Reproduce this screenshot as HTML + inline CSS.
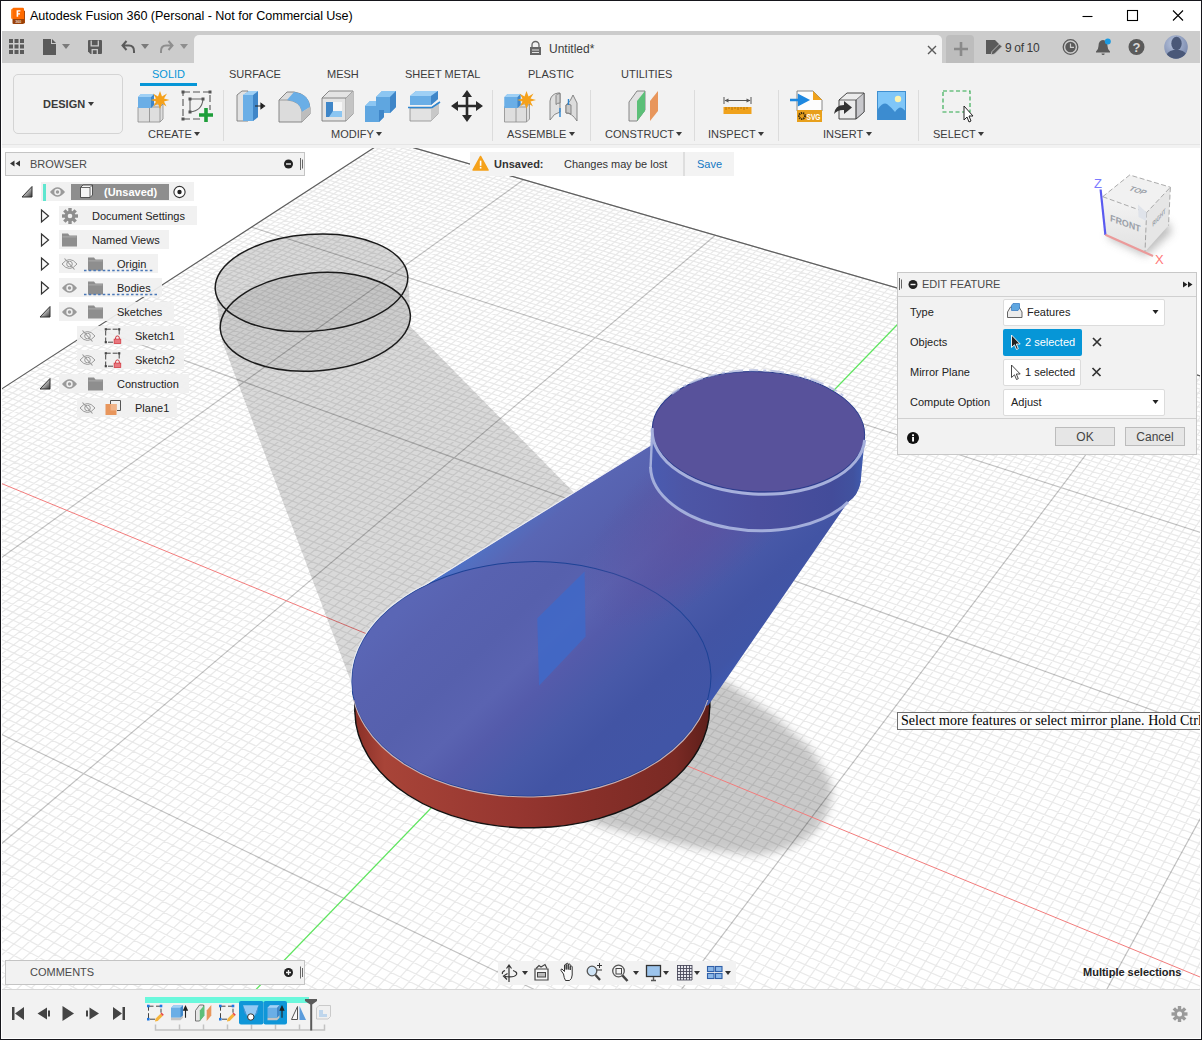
<!DOCTYPE html>
<html lang="en"><head><meta charset="utf-8"><title>Autodesk Fusion 360</title>
<style>
*{box-sizing:border-box;margin:0;padding:0}
html,body{width:1202px;height:1040px;overflow:hidden;background:#16161c}
body{font-family:"Liberation Sans",sans-serif;font-size:12px;color:#333;position:relative}
.win{position:absolute;left:1px;top:1px;width:1200px;height:1038px;background:#fff;overflow:hidden}
.abs{position:absolute}
svg{position:absolute;overflow:visible}
.t{position:absolute;white-space:nowrap;line-height:14px}
/* title bar */
.title{left:29px;top:7px;font-size:12.6px;color:#000;letter-spacing:-0.05px;line-height:16px}
.strip{left:0;top:30px;width:1200px;height:32px;background:#cccccc}
.doctab{left:193px;top:34px;width:748px;height:30px;background:#f2f2f2;border-radius:5px 5px 0 0}
.plus{left:945px;top:34px;width:28px;height:28px;background:#bdbdbd;border-radius:4px 4px 0 0}
.ribbon{left:0;top:62px;width:1200px;height:85px;background:#f2f2f2}
.rib-bot{left:0;top:143px;width:1200px;height:1px;background:#e5e5e5}
.tab{font-size:11px;color:#3c3c3c;top:66px}
.glabel{font-size:11px;color:#3c3c3c;top:126px}
.sep{top:89px;width:1px;height:51px;background:#dcdcdc}
.design{left:12px;top:73px;width:110px;height:60px;border:1px solid #d4d4d4;border-radius:5px;background:#f2f2f2}
.vp{left:0;top:147px;overflow:hidden}
.panelhdr{background:#f2f2f2;border:1px solid #c4c4c4}
.row{position:absolute;height:19px;background:rgba(240,240,240,.92)}
.row .t{top:3px;color:#222;font-size:11px}
.bottom{left:0;top:989px;width:1200px;height:49px;background:#f2f2f2}
</style></head><body><div class="win">

<!-- title bar -->
<svg class="abs" style="left:9px;top:6px" width="16" height="18" viewBox="0 0 16 18"><path d="M1 2.5 L3 1.5 V12 L1 11.5Z" fill="#ff8a2a"/><path d="M14 3.5 L15 4 V16 L14 16.5Z" fill="#a8460a"/><rect x="2.5" y="0.8" width="11.5" height="11.6" rx="1.2" fill="#ff6b00"/><path d="M2.5 12 H14 V16 a1 1 0 0 1 -1 1 H3.5 a1 1 0 0 1 -1 -1Z" fill="#9b4209"/><path d="M6.6 3.2 H10.4 V4.6 H8.2 V6.2 H10 V7.5 H8.2 V9.8 H6.6Z" fill="#fff"/><text x="8.3" y="15.6" font-size="3.6" font-weight="700" fill="#e8d8c8" text-anchor="middle" font-family="Liberation Sans,sans-serif">360</text></svg>
<div class="t title">Autodesk Fusion 360 (Personal - Not for Commercial Use)</div>
<svg class="abs" style="left:1075px;top:4px" width="120" height="24" viewBox="1076 5 120 24" fill="none" stroke="#000" stroke-width="1.1"><path d="M1082.500 16.500 H1092.500"/><rect x="1127.5" y="10.500" width="10" height="10"/><path d="M1173 10.500 L1183 20.500 M1183 10.500 L1173 20.500"/></svg>
<!-- toolbar strip -->
<div class="abs strip"></div>
<div class="abs doctab"></div>
<div class="abs plus"></div>
<div class="abs ribbon"></div>
<div class="abs rib-bot"></div>

<!-- quick access toolbar -->
<svg class="abs" style="left:0;top:30px" width="200" height="32" viewBox="1 31 200 32">
<g fill="#5a5a5a">
<rect x="9" y="39" width="4" height="4"/><rect x="14.500" y="39" width="4" height="4"/><rect x="20" y="39" width="4" height="4"/>
<rect x="9" y="44.500" width="4" height="4"/><rect x="14.500" y="44.500" width="4" height="4"/><rect x="20" y="44.500" width="4" height="4"/>
<rect x="9" y="50" width="4" height="4"/><rect x="14.500" y="50" width="4" height="4"/><rect x="20" y="50" width="4" height="4"/>
<path d="M43 39 H51 V44 H56 V55 H43Z M52 39 L56 43 H52Z"/>
<path d="M62 44 H70 L66 49Z" fill="#7a7a7a"/>
<path d="M88 41 a1 1 0 0 1 1 -1 H101 a1 1 0 0 1 1 1 V53 a1 1 0 0 1 -1 1 H90.500 L88 51.500Z"/><path d="M91.200 40.500 V45.800 H98.300 V40.500 M92.200 54 V49.700 H97.300 V54" stroke="#ccc" stroke-width="1.300" fill="none"/>
<path d="M141 44 H149 L145 49Z" fill="#7a7a7a"/>
<path d="M180 44 H188 L184 49Z" fill="#8e8e8e"/>
</g>
<path d="M126.500 41 L122.500 45.500 L126.500 50 M123 45.500 H129 Q134 45.500 134 51 V53" fill="none" stroke="#5a5a5a" stroke-width="2"/>
<path d="M168.500 41 L172.500 45.500 L168.500 50 M172 45.500 H166 Q161 45.500 161 51 V53" fill="none" stroke="#8e8e8e" stroke-width="2"/>
</svg>
<!-- doc tab content -->
<svg class="abs" style="left:525px;top:38px" width="20" height="20" viewBox="526 39 20 20"><path d="M532 47 V45 a3.500 3.500 0 0 1 7 0 V47" fill="none" stroke="#666" stroke-width="1.300"/><rect x="530" y="47" width="11" height="8" fill="#666"/><path d="M532 50 H539 M532 52.500 H539" stroke="#f2f2f2" stroke-width="0.900"/></svg>
<div class="t" style="left:548px;top:41px;font-size:12px;color:#3c3c3c">Untitled*</div>
<svg class="abs" style="left:924px;top:42px" width="14" height="14" viewBox="0 0 14 14"><path d="M3 3 L11 11 M11 3 L3 11" stroke="#5a5a5a" stroke-width="1.400"/></svg>
<svg class="abs" style="left:950px;top:38px" width="20" height="20" viewBox="0 0 20 20"><path d="M10 3 V17 M3 10 H17" stroke="#8a8a8a" stroke-width="2.600"/></svg>
<!-- right icons -->
<svg class="abs" style="left:980px;top:34px" width="220" height="28" viewBox="981 35 220 28">
<path d="M986 40 H995 L999 44 V47 L992 54 H986Z" fill="#5a5a5a"/><path d="M991 55 L992 51.500 L999.500 44 L1002 46.500 L994.500 54Z" fill="#5a5a5a" stroke="#ccc" stroke-width="0.800"/>
<circle cx="1070.500" cy="47" r="7.300" fill="none" stroke="#5a5a5a" stroke-width="1.300"/><circle cx="1070.500" cy="47" r="5.200" fill="#5a5a5a"/><path d="M1070.500 43.500 V47.300 H1074" fill="none" stroke="#ccc" stroke-width="1.200"/>
<path d="M1103 40 q-4.500 0.500 -4.500 6 q0 3.500 -2.500 5.500 V52.500 H1110 V51.500 q-2.500 -2 -2.500 -5.500 q0 -5.500 -4.500 -6Z M1101.500 53.500 a1.600 1.600 0 0 0 3.200 0Z" fill="#5a5a5a"/><circle cx="1107.800" cy="41.500" r="3" fill="#1b9ae0"/>
<circle cx="1136.500" cy="47" r="8" fill="#5a5a5a"/><text x="1136.500" y="52" font-size="13" font-weight="700" fill="#d8d8d8" text-anchor="middle" font-family="Liberation Sans,sans-serif">?</text>
<defs><radialGradient id="av" cx="0.4" cy="0.35" r="0.8"><stop offset="0" stop-color="#b8c4dc"/><stop offset="1" stop-color="#6f7fa6"/></radialGradient><clipPath id="avc"><circle cx="1176" cy="47" r="11.800"/></clipPath></defs>
<circle cx="1176" cy="47" r="11.800" fill="url(#av)"/>
<g clip-path="url(#avc)" fill="#4a5878"><ellipse cx="1176.500" cy="43.500" rx="5.200" ry="6.800"/><path d="M1165 60 q1 -9 8.500 -10 h6 q7.500 1 8.500 10Z"/></g>
</svg>
<div class="t" style="left:1004px;top:40px;font-size:12px;letter-spacing:-0.35px;color:#3a3a3a">9 of 10</div>

<!-- ribbon -->
<div class="abs design"></div>
<div class="t" style="left:42px;top:96px;font-size:11px;font-weight:700;color:#3a3a3a">DESIGN</div>
<div class="t tab" style="left:151px;color:#0696d7">SOLID</div>
<div class="abs" style="left:139px;top:82px;width:57px;height:3px;background:#0696d7"></div>
<div class="t tab" style="left:228px">SURFACE</div>
<div class="t tab" style="left:326px">MESH</div>
<div class="t tab" style="left:404px">SHEET METAL</div>
<div class="t tab" style="left:527px">PLASTIC</div>
<div class="t tab" style="left:620px">UTILITIES</div>
<div class="t glabel" style="left:147px">CREATE</div>
<div class="t glabel" style="left:330px">MODIFY</div>
<div class="t glabel" style="left:506px">ASSEMBLE</div>
<div class="t glabel" style="left:604px">CONSTRUCT</div>
<div class="t glabel" style="left:707px">INSPECT</div>
<div class="t glabel" style="left:822px">INSERT</div>
<div class="t glabel" style="left:932px">SELECT</div>
<div class="abs sep" style="left:222px"></div><div class="abs sep" style="left:491px"></div><div class="abs sep" style="left:589px"></div><div class="abs sep" style="left:693px"></div><div class="abs sep" style="left:777px"></div><div class="abs sep" style="left:917px"></div>
<svg class="abs" style="left:0;top:62px" width="1200" height="85" viewBox="1 63 1200 85">
<defs>
<linearGradient id="bl" x1="0" y1="0" x2="0" y2="1"><stop offset="0" stop-color="#7dbcec"/><stop offset="1" stop-color="#5aa2dc"/></linearGradient>
<g id="arr"><path d="M0 0 H6 L3 4Z" fill="#3a3a3a"/></g>
<g id="star"><path d="M0 -9 L2 -3.500 L7 -6.500 L4 -1.500 L9.500 0 L4 1.500 L6.500 6.500 L2 3.500 L0 9 L-2 3.500 L-6.500 6.500 L-4 1.500 L-9.500 0 L-4 -1.500 L-7 -6.500 L-2 -3.500Z" fill="#f5a11a"/></g>
<g id="newcomp">
<path d="M1 16 L4 13 H26 V28 L23 31 H1Z" fill="#dedede" stroke="#8a8a8a" stroke-width="0.800"/>
<path d="M1 16 H23 V31 M23 16 L26 13 M12.500 16 V31" fill="none" stroke="#8a8a8a" stroke-width="0.800"/>
<path d="M1 6 L4 3 H17 V14 L14 17 H1Z" fill="#6aaee6"/><path d="M1 6 H14 V17 H1Z" fill="#6aaee6"/><path d="M14 6 L17 3 V14 L14 17Z" fill="#3f86c8"/><path d="M1 6 L4 3 H17 L14 6Z" fill="#9fd0f5"/>
<use href="#star" x="23" y="9"/>
</g>
</defs>
<!-- dropdown arrows -->
<use href="#arr" x="88" y="102"/><use href="#arr" x="194" y="132"/><use href="#arr" x="376" y="132"/><use href="#arr" x="569" y="132"/><use href="#arr" x="676" y="132"/><use href="#arr" x="758" y="132"/><use href="#arr" x="866" y="132"/><use href="#arr" x="978" y="132"/>
<!-- CREATE -->
<use href="#newcomp" x="137" y="91"/>
<g transform="translate(181 90)" fill="none" stroke="#555" stroke-width="1.100">
<path d="M2 2 H29 V20 M19 29 H2 V2" stroke-dasharray="7 3"/>
<path d="M9 9 H22 Q21 21 9 22Z" stroke="#666"/>
<g fill="#555" stroke="none"><rect x="0.500" y="0.500" width="3" height="3"/><rect x="27.500" y="0.500" width="3" height="3"/><rect x="0.500" y="27.500" width="3" height="3"/><rect x="7.500" y="7.500" width="3" height="3"/><rect x="20.500" y="7.500" width="3" height="3"/><rect x="7.500" y="20.500" width="3" height="3"/></g>
<path d="M25 18 V32 M18 25 H32" stroke="#1e9e3a" stroke-width="3.600"/>
</g>
<!-- MODIFY: press pull -->
<g transform="translate(236 90)">
<path d="M1 5 L6 1 H12 V31 H1Z" fill="#e2e2e2" stroke="#7a7a7a" stroke-width="0.900"/>
<path d="M7 5 L13 1 H22 V27 L17 31 H7Z" fill="#6aaee6"/><path d="M17 5 L22 1 V27 L17 31Z" fill="#3f86c8"/><path d="M7 5 L13 1 H22 L17 5Z" fill="#9fd0f5"/>
<path d="M19 16 H27 M25 13.500 L28.500 16 L25 18.500Z" stroke="#222" stroke-width="1.200" fill="#222"/>
</g>
<!-- fillet -->
<g transform="translate(278 90)">
<path d="M1 32 V10 L9 2 H16 Q31 4 32 18 V24 L24 32Z" fill="#dcdcdc" stroke="#7a7a7a" stroke-width="0.900"/>
<path d="M24 32 V21 Q22 11 9 10 H1 M24 21 L32 14" fill="none" stroke="#8a8a8a" stroke-width="0.800"/>
<path d="M9 10 L16 2 Q31 4 32 17 L24 22 Q22 11 9 10Z" fill="#6aaee6"/>
<path d="M24 32 V22 L32 17 V24Z" fill="#bdbdbd"/>
</g>
<!-- shell -->
<g transform="translate(321 90)">
<path d="M1 8 L8 1 H32 V24 L25 31 H1Z" fill="#e4e4e4" stroke="#7a7a7a" stroke-width="0.900"/>
<path d="M1 8 H25 V31 M25 8 L32 1" fill="none" stroke="#7a7a7a" stroke-width="0.900"/><path d="M25 8 L32 1 V24 L25 31Z" fill="#c4c4c4"/>
<path d="M5 12 H21 V27 H5Z" fill="#f6f6f6"/><path d="M5 12 H12 V21 H21 V27 H5Z" fill="#3f86c8"/><path d="M12 21 H21 V27 H8Z" fill="#8cc6f2"/>
</g>
<!-- combine -->
<g transform="translate(364 90)">
<path d="M12 7 L18 1 H32 V17 L26 23 H20 V27 L15 32 H1 V16 L6 11 H12Z" fill="#5fa6e0"/>
<path d="M12 7 L18 1 H32 L26 7Z M1 16 L6 11 H12 V16Z" fill="#8cc6f2"/><path d="M26 7 L32 1 V17 L26 23Z M15 20 H20 V27 L15 32Z" fill="#3f86c8"/>
</g>
<!-- offset face / split -->
<g transform="translate(407 90)">
<path d="M3 18 H24 L31 13 V24 L24 31 H3Z" fill="#e2e2e2" stroke="#8a8a8a" stroke-width="0.800"/><path d="M24 18 L31 13 V24 L24 31Z" fill="#c8c8c8"/>
<path d="M3 6 L9 1 H31 V9 L24 15 H3Z" fill="#6aaee6"/><path d="M3 6 L9 1 H31 L24 6Z" fill="#9fd0f5"/><path d="M24 6 L31 1 V9 L24 15Z" fill="#3f86c8"/>
<path d="M1 17.500 H25 L33 12" fill="none" stroke="#2f86d0" stroke-width="1.600"/>
</g>
<!-- move -->
<g transform="translate(451 90)" fill="#2a2a2a"><path d="M14.700 6 H17.300 V14.700 H26 V17.300 H17.300 V26 H14.700 V17.300 H6 V14.700 H14.700Z"/><path d="M16 0 L21 7 H11Z M16 32 L21 25 H11Z M0 16 L7 11 V21Z M32 16 L25 11 V21Z"/></g>
<!-- ASSEMBLE -->
<use href="#newcomp" x="503.500" y="91"/>
<g transform="translate(548 91)" stroke="#7a7a7a" stroke-width="0.900">
<path d="M2 29 V10 Q3 3 10 2 H12 V21 Q6 22 2 29Z" fill="#e0e0e0"/><path d="M8 4.500 Q9 2.500 12 2.500 V12 Q9 12 8 13.500Z" fill="#cfcfcf"/>
<path d="M18 14 Q23 10 25 4 L29 12 V30 Q24 22 18 22Z" fill="#dcdcdc"/><path d="M18 14 Q20.500 12.500 23 14 V23 Q20 21.500 18 22Z" fill="#c8c8c8"/>
<path d="M12 17 V26 M20.500 8 V14" stroke="#2f86d0" stroke-width="1.400"/>
</g>
<!-- CONSTRUCT -->
<g transform="translate(628 90)">
<path d="M1 12 L9 1 H17 V20 L9 31 H1Z" fill="#e2e2e2" stroke="#7a7a7a" stroke-width="0.900"/>
<path d="M9 11 L17 1 V21 L9 31Z" fill="#5cbf78"/>
<path d="M22 11 L30 1 V21 L22 31Z" fill="#e8965c"/>
</g>
<!-- INSPECT -->
<g transform="translate(723 97)">
<path d="M1 0 V7 M28 0 V7 M2 3.500 H27" stroke="#555" stroke-width="1" fill="none"/><path d="M1.500 3.500 L5.500 1.500 V5.500Z M27.500 3.500 L23.500 1.500 V5.500Z" fill="#555"/>
<rect x="0.500" y="10" width="28" height="7" fill="#f0a21c"/><path d="M3 10 V13 M6 10 V12 M9 10 V13 M12 10 V12 M15 10 V13 M18 10 V12 M21 10 V13 M24 10 V12" stroke="#a86a08" stroke-width="0.800"/>
</g>
<!-- INSERT svg -->
<g transform="translate(790 90)">
<path d="M7 1 H23 L32 10 V21 H7Z" fill="#fdfdfd" stroke="#7a7a7a" stroke-width="0.900"/><path d="M23 1 L32 10 H23Z" fill="#f0a21c"/>
<path d="M0 10 H11 M9 5.500 L17.500 10 L9 14.500Z" stroke="#1e88e0" stroke-width="2.400" fill="#1e88e0"/>
<rect x="7" y="20" width="25" height="12" fill="#e8a01c"/><circle cx="12" cy="26" r="3" fill="none" stroke="#3a2a10" stroke-width="2" stroke-dasharray="1.300 0.800"/>
<text x="23.500" y="30" font-size="9" font-weight="700" fill="#fff" text-anchor="middle" font-family="Liberation Sans,sans-serif" textLength="14" lengthAdjust="spacingAndGlyphs">SVG</text>
</g>
<!-- insert derive -->
<g transform="translate(834 90)">
<path d="M5 10 L13 3 H30 V22 L22 29 H5Z" fill="#ececec" stroke="#333" stroke-width="0.900"/><path d="M22 10 L30 3 V22 L22 29Z" fill="#c8c8cc" stroke="#333" stroke-width="0.600"/><path d="M5 10 H22 V29" fill="none" stroke="#333" stroke-width="0.700"/>
<path d="M0 24 Q1 15 10 15 V11 L18 17.500 L10 24 V20 Q4 19.500 0 24Z" fill="#333"/>
</g>
<!-- canvas -->
<g transform="translate(877 91)"><rect x="0.500" y="0.500" width="28" height="28" fill="#7fc6f8" stroke="#3f8fd0" stroke-width="1"/><path d="M1 29 V18 Q6 11 10 13 Q15 17 18 21 Q22 15 25 17 L28.500 20 V29Z" fill="#3c8cd0"/><circle cx="21" cy="8" r="3.200" fill="#fbf3b0"/></g>
<!-- SELECT -->
<g transform="translate(942 90)"><rect x="1" y="1" width="27" height="21" fill="none" stroke="#2aa84a" stroke-width="1.100" stroke-dasharray="4 2.500"/><path d="M22 16 V30 L25 27 L27 32 L29 31 L27 26 H31Z" fill="#fff" stroke="#222" stroke-width="1"/></g>
</svg>

<svg class="vp" width="1200" height="841" viewBox="1 148 1200 841">
<defs>
<linearGradient id="gfade" gradientUnits="userSpaceOnUse" x1="0" y1="330" x2="0" y2="860"><stop offset="0" stop-color="#dadada"/><stop offset="1" stop-color="#dadada" stop-opacity="0"/></linearGradient>
<filter id="blur8" x="-20%" y="-20%" width="140%" height="140%"><feGaussianBlur stdDeviation="4.5"/></filter>
<filter id="blur3" x="-20%" y="-20%" width="140%" height="140%"><feGaussianBlur stdDeviation="2.5"/></filter>
<linearGradient id="gred" gradientUnits="userSpaceOnUse" x1="355" y1="0" x2="710" y2="0"><stop offset="0" stop-color="#8a3028"/><stop offset="0.08" stop-color="#a84438"/><stop offset="0.45" stop-color="#963630"/><stop offset="0.62" stop-color="#8a302a"/><stop offset="0.9" stop-color="#7a2a24"/><stop offset="1" stop-color="#5c1e1a"/></linearGradient>
<linearGradient id="gbody" gradientUnits="userSpaceOnUse" x1="430" y1="582" x2="618.6" y2="787"><stop offset="0" stop-color="#4b73cb"/><stop offset="0.05" stop-color="#536fc0"/><stop offset="0.13" stop-color="#5966b4"/><stop offset="0.3" stop-color="#5660ad"/><stop offset="0.45" stop-color="#5a63b1"/><stop offset="0.55" stop-color="#545bab"/><stop offset="0.7" stop-color="#4859a8"/><stop offset="0.82" stop-color="#4254a4"/><stop offset="0.93" stop-color="#4055a6"/><stop offset="1" stop-color="#3e59b0"/></linearGradient>
<linearGradient id="gtop2" gradientUnits="userSpaceOnUse" x1="430" y1="582" x2="618.6" y2="787"><stop offset="0" stop-color="#5a66b5"/><stop offset="0.12" stop-color="#5862b0"/><stop offset="0.3" stop-color="#5660ad"/><stop offset="0.45" stop-color="#5a63b1"/><stop offset="0.55" stop-color="#545bab"/><stop offset="0.7" stop-color="#4859a8"/><stop offset="0.82" stop-color="#4254a4"/><stop offset="1" stop-color="#4155a6"/></linearGradient>
<radialGradient id="gpurp"><stop offset="0" stop-color="#5c4f9c" stop-opacity="0.75"/><stop offset="0.6" stop-color="#5c4f9c" stop-opacity="0.35"/><stop offset="1" stop-color="#5c4f9c" stop-opacity="0"/></radialGradient>
<linearGradient id="gtop" gradientUnits="userSpaceOnUse" x1="380" y1="760" x2="700" y2="580"><stop offset="0" stop-color="#5a62b0"/><stop offset="0.35" stop-color="#555dab"/><stop offset="0.7" stop-color="#4455a6"/><stop offset="1" stop-color="#4a58a8"/></linearGradient>
<linearGradient id="gloft" gradientUnits="userSpaceOnUse" x1="520" y1="500" x2="790" y2="620"><stop offset="0" stop-color="#4f6fc4"/><stop offset="0.18" stop-color="#5565b4"/><stop offset="0.45" stop-color="#57549f"/><stop offset="0.7" stop-color="#46509f"/><stop offset="0.9" stop-color="#3f55a8"/><stop offset="1" stop-color="#3c5cb4"/></linearGradient>
<linearGradient id="gcyl" gradientUnits="userSpaceOnUse" x1="652" y1="0" x2="864" y2="0"><stop offset="0" stop-color="#4a5bb0"/><stop offset="0.15" stop-color="#4d56a6"/><stop offset="0.5" stop-color="#4b4f9e"/><stop offset="0.85" stop-color="#434c9a"/><stop offset="0.95" stop-color="#41529f"/><stop offset="1" stop-color="#3f5cb0"/></linearGradient>
</defs>
<rect x="0" y="140" width="1202" height="860" fill="#ffffff"/>
<g filter="url(#blur8)"><path d="M640 690 L724 680 L773 715 L810 748 L829 778 Q838 798 820 826 Q800 850 759 855 Q716 853 666 842 L600 826 L540 800 Z" fill="#000" fill-opacity="0.21"/></g>
<g fill="none" stroke-width="1">
<path d="M-562.2 760.4L390.5 141M-555.9 764L395.9 142.6M-549.6 767.7L401.3 144.1M-543.2 771.3L406.7 145.7M-536.8 774.9L412.1 147.3M-530.4 778.6L417.6 148.8M-524 782.3L423 150.4M-517.6 786L428.5 152M-511.1 789.7L434 153.6M-504.6 793.4L439.5 155.2M-498.1 797.1L445 156.8M-491.5 800.9L450.5 158.4M-484.9 804.6L456 160M-478.3 808.4L461.6 161.6M-471.7 812.2L467.2 163.2M-465 816L472.7 164.8M-458.4 819.8L478.4 166.5M-451.6 823.7L484 168.1M-444.9 827.5L489.6 169.7M-438.1 831.4L495.2 171.4M-431.3 835.3L500.9 173M-424.5 839.2L506.6 174.7M-417.7 843.1L512.3 176.3M-410.8 847.1L518 178M-396.9 855L529.4 181.3M-390 859L535.2 183M-383 863L541 184.6M-375.9 867L546.7 186.3M-368.9 871L552.5 188M-361.8 875.1L558.4 189.7M-354.7 879.2L564.2 191.4M-347.5 883.3L570 193.1M-340.3 887.4L575.9 194.8M-333.1 891.5L581.8 196.5M-325.9 895.6L587.7 198.2M-318.6 899.8L593.6 199.9M-311.3 904L599.5 201.6M-304 908.2L605.5 203.3M-296.6 912.4L611.4 205.1M-289.2 916.6L617.4 206.8M-281.8 920.9L623.4 208.5M-274.4 925.1L629.4 210.3M-266.9 929.4L635.4 212M-259.3 933.7L641.5 213.8M-251.8 938L647.5 215.5M-244.2 942.4L653.6 217.3M-236.6 946.7L659.7 219.1M-228.9 951.1L665.8 220.8M-221.2 955.5L671.9 222.6M-213.5 959.9L678.1 224.4M-205.8 964.4L684.2 226.2M-198 968.8L690.4 228M-190.1 973.3L696.6 229.8M-182.3 977.8L702.8 231.6M-174.4 982.3L709 233.4M-158.5 991.4L721.6 237M-150.5 996L727.8 238.8M-142.5 1000.6L734.1 240.6M-134.4 1005.2L740.5 242.5M-126.3 1009.9L746.8 244.3M-118.1 1014.5L753.2 246.2M-109.9 1019.2L759.5 248M-101.7 1023.9L765.9 249.9M-93.5 1028.6L772.3 251.7M-85.2 1033.4L778.7 253.6M-76.8 1038.1L785.2 255.4M-68.5 1042.9L791.7 257.3M-60.1 1047.7L798.1 259.2M-51.6 1052.6L804.6 261.1M-43.1 1057.4L811.2 263M-34.6 1062.3L817.7 264.9M-26 1067.2L824.3 266.8M-17.4 1072.1L830.8 268.7M-8.8 1077.1L837.4 270.6M-0.1 1082.1L844 272.5M8.6 1087.1L850.7 274.4M17.4 1092.1L857.3 276.4M26.2 1097.1L864 278.3M35.1 1102.2L870.7 280.2M44 1107.3L877.4 282.2M52.9 1112.4L884.1 284.1M61.9 1117.5L890.9 286.1M70.9 1122.7L897.7 288.1M79.9 1127.9L904.4 290M89 1133.1L911.3 292M98.2 1138.3L918.1 294M116.6 1148.8L931.8 298M125.9 1154.1L938.7 300M135.2 1159.5L945.6 302M144.6 1164.8L952.5 304M154 1170.2L959.5 306M163.5 1175.6L966.5 308M173 1181.1L973.5 310M182.5 1186.6L980.5 312.1M192.1 1192.1L987.5 314.1M201.8 1197.6L994.6 316.2M211.5 1203.1L1001.6 318.2M221.2 1208.7L1008.7 320.3M231 1214.3L1015.9 322.3M240.9 1219.9L1023 324.4M250.7 1225.6L1030.2 326.5M260.7 1231.3L1037.3 328.6M270.7 1237L1044.5 330.6M280.7 1242.7L1051.8 332.7M290.8 1248.5L1059 334.8M300.9 1254.3L1066.3 337M311.1 1260.1L1073.6 339.1M321.4 1266L1080.9 341.2M331.7 1271.9L1088.2 343.3M342 1277.8L1095.6 345.5M352.4 1283.8L1103 347.6M362.9 1289.7L1110.4 349.7M373.4 1295.8L1117.8 351.9M383.9 1301.8L1125.3 354.1M394.6 1307.9L1132.7 356.2M405.2 1314L1140.2 358.4M416 1320.1L1147.8 360.6M437.6 1332.5L1162.9 365M448.5 1338.7L1170.5 367.2M459.4 1345L1178.1 369.4M470.4 1351.3L1185.7 371.6M481.5 1357.6L1193.4 373.8M492.6 1364L1201 376M503.8 1370.4L1208.8 378.3M515 1376.8L1216.5 380.5M526.3 1383.3L1224.2 382.8M537.7 1389.8L1232 385M549.1 1396.3L1239.8 387.3M560.6 1402.9L1247.7 389.5M572.2 1409.5L1255.5 391.8M583.8 1416.1L1263.4 394.1M595.4 1422.8L1271.3 396.4M607.2 1429.5L1279.2 398.7M619 1436.3L1287.2 401M630.8 1443.1L1295.2 403.3M642.8 1449.9L1303.2 405.6M654.8 1456.8L1311.2 408M666.8 1463.7L1319.3 410.3M678.9 1470.6L1327.3 412.7M691.1 1477.6L1335.5 415M703.4 1484.6L1343.6 417.4M715.7 1491.6L1351.8 419.7M728.1 1498.7L1359.9 422.1M740.6 1505.9L1368.2 424.5M753.1 1513L1376.4 426.9M765.7 1520.3L1384.7 429.3M778.4 1527.5L1393 431.7M791.1 1534.8L1401.3 434.1M816.9 1549.5L1418 438.9M829.8 1556.9L1426.4 441.4M842.9 1564.4L1434.8 443.8M856 1571.9L1443.3 446.3M869.2 1579.4L1451.8 448.7M882.4 1587L1460.3 451.2M895.8 1594.7L1468.8 453.7M909.2 1602.4L1477.4 456.2M922.7 1610.1L1486 458.7M936.3 1617.8L1494.6 461.2M949.9 1625.7L1503.3 463.7M963.7 1633.5L1511.9 466.2M977.5 1641.4L1520.7 468.7M991.4 1649.4L1529.4 471.2M1005.4 1657.4L1538.2 473.8M1019.4 1665.4L1547 476.3M1033.6 1673.5L1555.8 478.9M1047.8 1681.7L1564.6 481.5M1062.1 1689.9L1573.5 484M-558.2 751.7L1070.7 1678.1M-549.2 745.9L1076.3 1664.8M-540.3 740.1L1081.8 1651.7M-531.5 734.4L1087.3 1638.7M-522.7 728.7L1092.8 1625.8M-513.9 723.1L1098.2 1613M-505.3 717.4L1103.5 1600.3M-496.6 711.8L1108.8 1587.8M-488.1 706.3L1114.1 1575.4M-479.6 700.8L1119.3 1563.1M-471.1 695.3L1124.4 1550.9M-462.7 689.8L1129.5 1538.9M-454.3 684.4L1134.6 1526.9M-446 679L1139.6 1515.1M-437.8 673.7L1144.6 1503.3M-429.6 668.4L1149.5 1491.7M-421.4 663.1L1154.4 1480.2M-413.3 657.8L1159.2 1468.7M-405.2 652.6L1164 1457.4M-397.2 647.4L1168.7 1446.2M-389.3 642.3L1173.4 1435.1M-381.4 637.1L1178.1 1424.1M-373.5 632.1L1182.7 1413.1M-365.7 627L1187.3 1402.3M-357.9 622L1191.8 1391.6M-350.2 617L1196.3 1380.9M-342.5 612L1200.8 1370.4M-334.9 607L1205.2 1359.9M-327.3 602.1L1209.6 1349.6M-319.8 597.2L1213.9 1339.3M-312.3 592.4L1218.2 1329.1M-297.4 582.8L1226.7 1309M-290.1 578L1230.9 1299.1M-282.8 573.2L1235.1 1289.2M-275.5 568.5L1239.2 1279.4M-268.3 563.8L1243.3 1269.7M-261.1 559.2L1247.4 1260.1M-253.9 554.5L1251.4 1250.6M-246.8 549.9L1255.4 1241.2M-239.7 545.4L1259.4 1231.8M-232.7 540.8L1263.3 1222.5M-225.7 536.3L1267.2 1213.3M-218.8 531.8L1271.1 1204.1M-211.8 527.3L1274.9 1195.1M-205 522.8L1278.7 1186.1M-198.1 518.4L1282.5 1177.1M-191.3 514L1286.2 1168.3M-184.6 509.6L1289.9 1159.5M-177.9 505.3L1293.6 1150.8M-171.2 500.9L1297.3 1142.1M-164.5 496.6L1300.9 1133.5M-157.9 492.3L1304.5 1125M-151.4 488.1L1308.1 1116.6M-144.8 483.9L1311.6 1108.2M-138.3 479.6L1315.2 1099.9M-131.9 475.5L1318.6 1091.6M-125.4 471.3L1322.1 1083.4M-119 467.1L1325.5 1075.3M-112.7 463L1329 1067.2M-106.3 458.9L1332.3 1059.2M-100.1 454.8L1335.7 1051.3M-93.8 450.8L1339 1043.4M-81.4 442.7L1345.6 1027.8M-75.2 438.8L1348.9 1020.1M-69.1 434.8L1352.1 1012.4M-63 430.8L1355.3 1004.8M-57 426.9L1358.5 997.3M-50.9 423L1361.7 989.8M-44.9 419.1L1364.8 982.4M-39 415.3L1368 975M-33 411.4L1371.1 967.7M-27.1 407.6L1374.1 960.4M-21.3 403.8L1377.2 953.2M-15.4 400L1380.2 946M-9.6 396.2L1383.2 938.9M-3.8 392.5L1386.2 931.8M1.9 388.8L1389.2 924.8M7.6 385.1L1392.1 917.8M13.3 381.4L1395 910.9M19 377.7L1398 904M24.6 374L1400.8 897.2M30.2 370.4L1403.7 890.4M35.8 366.8L1406.5 883.7M41.4 363.2L1409.4 877M46.9 359.6L1412.2 870.4M52.4 356.1L1415 863.8M57.8 352.5L1417.7 857.3M63.3 349L1420.5 850.8M68.7 345.5L1423.2 844.3M74.1 342L1425.9 837.9M79.4 338.5L1428.6 831.5M84.7 335.1L1431.3 825.2M90.1 331.7L1433.9 818.9M100.6 324.8L1439.2 806.5M105.8 321.4L1441.8 800.3M111 318.1L1444.4 794.2M116.2 314.7L1447 788.1M121.3 311.4L1449.5 782.1M126.4 308.1L1452.1 776.1M131.5 304.8L1454.6 770.1M136.6 301.5L1457.1 764.2M141.7 298.2L1459.6 758.3M146.7 294.9L1462 752.5M151.7 291.7L1464.5 746.7M156.7 288.5L1466.9 740.9M161.6 285.3L1469.4 735.2M166.6 282.1L1471.8 729.5M171.5 278.9L1474.2 723.8M176.3 275.7L1476.5 718.2M181.2 272.6L1478.9 712.6M186 269.5L1481.3 707M190.9 266.3L1483.6 701.5M195.6 263.2L1485.9 696M200.4 260.1L1488.2 690.6M205.2 257.1L1490.5 685.2M209.9 254L1492.8 679.8M214.6 251L1495 674.4M219.3 247.9L1497.3 669.1M223.9 244.9L1499.5 663.8M228.6 241.9L1501.7 658.6M233.2 238.9L1503.9 653.3M237.8 235.9L1506.1 648.2M242.3 233L1508.3 643M246.9 230L1510.5 637.9M255.9 224.2L1514.8 627.7M260.4 221.3L1516.9 622.7M264.9 218.4L1519 617.7M269.3 215.5L1521.1 612.7M273.8 212.6L1523.2 607.8M278.2 209.7L1525.3 602.9M282.6 206.9L1527.4 598M286.9 204.1L1529.4 593.1M291.3 201.3L1531.5 588.3M295.6 198.4L1533.5 583.5M299.9 195.7L1535.5 578.7M304.2 192.9L1537.5 574M308.5 190.1L1539.5 569.2M312.7 187.3L1541.5 564.6M317 184.6L1543.5 559.9M321.2 181.9L1545.4 555.3M325.4 179.2L1547.4 550.6M329.6 176.4L1549.3 546.1M333.7 173.8L1551.2 541.5M337.9 171.1L1553.2 537M342 168.4L1555.1 532.5M346.1 165.7L1556.9 528M350.2 163.1L1558.8 523.5M354.3 160.4L1560.7 519.1M358.3 157.8L1562.6 514.7M362.3 155.2L1564.4 510.3M366.4 152.6L1566.3 506M370.4 150L1568.1 501.6M374.3 147.4L1569.9 497.3M378.3 144.9L1571.7 493.1M382.3 142.3L1573.5 488.8" stroke="#000" stroke-opacity="0.085" stroke-width="1.25"/>
<path d="M-403.9 851L523.7 179.6M-166.5 986.9L715.3 235.2M426.7 1326.3L1155.3 362.8M804 1542.1L1409.6 436.5M-567.2 757.6L1065 1691.5M-304.9 587.6L1222.5 1319M95.3 328.2L1436.6 812.7M251.4 227.1L1512.6 632.8M386.2 139.8L1575.3 484.6" stroke="#000" stroke-opacity="0.24" stroke-width="1.2"/>
<path d="M-567.2 757.6L386.2 139.8M386.2 139.8L1575.3 484.6" stroke="#5e5e5e" stroke-width="1.2"/>
<path d="M-87.6 446.8L1342.3 1035.6" stroke="#f27c7c"/>
<path d="M107.4 1143.6L924.9 296" stroke="#5fe45f" stroke-width="1.3"/>
</g>
<path d="M407.8 276.1L407.8 279.5L407.3 282.9L406.4 286.3L405 289.6L403.1 293L400.8 296.3L398.1 299.5L394.9 302.7L391.4 305.7L387.4 308.7L383.1 311.5L378.4 314.2L373.4 316.7L368.1 319.1L362.6 321.2L356.7 323.2L350.7 325L344.5 326.6L338.1 328L331.5 329.2L324.9 330.1L318.2 330.8L311.5 331.3L304.8 331.5L298.1 331.5L291.5 331.3L285 330.8L278.6 330.1L272.3 329.1L266.3 328L260.5 326.6L254.9 325L249.6 323.2L244.6 321.2L239.9 319L235.6 316.6L231.7 314.1L228.1 311.4L224.9 308.6L222.2 305.6L219.9 302.6L218 299.4L216.6 296.2L215.7 292.9L215.2 289.5L215.2 286.1L215.7 282.7L216.6 279.3L218 276L219.9 272.6L222.2 269.3L224.9 266.1L228.1 262.9L231.6 259.9L235.6 256.9L239.9 254.1L244.6 251.4L249.6 248.9L254.9 246.5L260.4 244.4L266.3 242.4L272.3 240.6L278.5 239L284.9 237.6L291.5 236.4L298.1 235.5L304.8 234.8L311.5 234.3L318.2 234.1L324.9 234.1L331.5 234.3L338 234.8L344.4 235.5L350.7 236.5L356.7 237.6L362.5 239L368.1 240.6L373.4 242.4L378.4 244.4L383.1 246.6L387.4 249L391.3 251.5L394.9 254.2L398.1 257L400.8 260L403.1 263L405 266.2L406.4 269.4L407.3 272.7ZM410.3 314.3L410.3 317.7L409.9 321.2L409 324.6L407.7 328.1L405.9 331.5L403.7 334.8L401 338.1L397.9 341.3L394.4 344.5L390.6 347.5L386.3 350.4L381.7 353.1L376.8 355.7L371.6 358.1L366.1 360.4L360.4 362.4L354.5 364.3L348.3 365.9L342 367.4L335.6 368.6L329.1 369.6L322.5 370.4L315.8 370.9L309.2 371.2L302.6 371.2L296 371L289.6 370.6L283.3 369.9L277.1 369L271.1 367.8L265.4 366.5L259.8 364.9L254.6 363.1L249.6 361.1L245 358.9L240.7 356.6L236.8 354L233.2 351.3L230.1 348.5L227.3 345.5L225 342.5L223.2 339.3L221.8 336L220.8 332.7L220.3 329.3L220.3 325.9L220.7 322.4L221.6 319L222.9 315.5L224.7 312.1L226.9 308.8L229.6 305.5L232.7 302.3L236.2 299.1L240 296.1L244.3 293.2L248.9 290.5L253.8 287.9L259 285.5L264.5 283.2L270.2 281.2L276.1 279.3L282.3 277.7L288.6 276.2L295 275L301.5 274L308.1 273.2L314.8 272.7L321.4 272.4L328 272.4L334.6 272.6L341 273L347.3 273.7L353.5 274.6L359.5 275.8L365.2 277.1L370.8 278.7L376 280.5L381 282.5L385.6 284.7L389.9 287L393.8 289.6L397.4 292.3L400.5 295.1L403.3 298.1L405.6 301.1L407.4 304.3L408.8 307.6L409.8 310.9ZM215 288L408 277L410.6 316L220 327ZM315 322L408.8 325.1L574.3 492.8L440 650L353 687L221.5 339.6Z" fill="#000" fill-opacity="0.15" fill-rule="nonzero"/>
<ellipse cx="315.3" cy="321.8" rx="95.3" ry="49" transform="rotate(-4.5 315.3 321.8)" fill="#000" fill-opacity="0.05"/>
<clipPath id="ce1"><ellipse cx="311.5" cy="282.8" rx="96.5" ry="48.4" transform="rotate(-4 311.5 282.8)" /></clipPath>
<g clip-path="url(#ce1)"><ellipse cx="315.3" cy="321.8" rx="95.3" ry="49" transform="rotate(-4.5 315.3 321.8)" fill="#000" fill-opacity="0.035"/></g>
<ellipse cx="315.3" cy="321.8" rx="95.3" ry="49" transform="rotate(-4.5 315.3 321.8)" fill="none" stroke="#1a1a1a" stroke-width="1.5"/>
<ellipse cx="311.5" cy="282.8" rx="96.5" ry="48.4" transform="rotate(-4 311.5 282.8)" fill="none" stroke="#1a1a1a" stroke-width="1.5"/>
<ellipse cx="532.3" cy="709.3" rx="177.4" ry="118.5" transform="rotate(-1 532.3 709.3)" fill="url(#gred)" stroke="#111" stroke-width="1.4"/>
<path d="M354.6 680 L355 712 L709.6 708 L710.6 680 Z" fill="url(#gred)"/>
<path d="M354.7 684 L355 712 M710.4 684 L709.7 708" stroke="#111" stroke-width="1.3" fill="none"/>
<path d="M430 582.4 L652 444.6 L651 468 L756 480 L861 481 Q858 496 848 502 L708.5 705 L560 760 L400 690 Z" fill="url(#gbody)"/>
<ellipse cx="531.3" cy="678.9" rx="179.7" ry="117.3" transform="rotate(-1.2 531.3 678.9)" fill="url(#gtop2)" stroke="#1d4296" stroke-width="1"/>
<clipPath id="cbody"><path d="M430 582.4 L652 444.6 L651 468 L756 480 L861 481 Q858 496 848 502 L708.5 705 L560 760 L400 690 Z"/></clipPath>
<g clip-path="url(#cbody)"><ellipse cx="700" cy="515" rx="150" ry="70" transform="rotate(-42 700 515)" fill="url(#gpurp)"/></g>
<clipPath id="clow"><rect x="340" y="700" width="380" height="110"/></clipPath>
<g clip-path="url(#clow)"><ellipse cx="531.3" cy="679.6999999999999" rx="179.7" ry="117.3" transform="rotate(-1.2 531.3 679.6999999999999)" fill="none" stroke="#d2bcc0" stroke-width="1.1" opacity="0.9"/></g>
<path d="M351.6 690.9L351.1 686.6L350.9 682.3L351 677.9L351.3 673.6L351.8 669.3L352.6 665L353.6 660.7L354.9 656.4L356.4 652.2L358.1 648L360.1 643.9L362.3 639.8L364.7 635.7L367.3 631.7L370.2 627.8L373.3 623.9L376.5 620.1L380 616.4L383.8 612.8L387.7 609.2L391.7 605.8L396 602.5L400.5 599.2L405.1 596.1L409.9 593L414.9 590.1L420 587.3L425.3 584.7L652 444.2" fill="none" stroke="#f2f2f8" stroke-width="1.1" opacity="0.85"/>
<path d="M652.3 430 L650.5 467 A106 62 2 0 0 848 502 Q858 496 860.8 480 L864.8 437.3 Z" fill="url(#gcyl)"/>
<path d="M650.5 467 A106 62 2 0 0 848 502" fill="none" stroke="#a3aedb" stroke-width="3"/>
<path d="M652.2 432 L650.6 467" fill="none" stroke="#a3aedb" stroke-width="2.4"/>
<ellipse cx="758.5" cy="431.7" rx="106.2" ry="60" transform="rotate(2.3 758.5 431.7)" fill="#58529b" stroke="#2a3c8c" stroke-width="1"/>
<path d="M652.4 428 A106.2 60 2.3 0 0 864.7 440" fill="none" stroke="#a6b0dc" stroke-width="3"/>
<path d="M672 394 A106.2 60 2.3 0 1 845 397" fill="none" stroke="#b4bce0" stroke-width="2" stroke-dasharray="9 5 3 4 14 6" opacity="0.8"/>
<path d="M584.6 571.6 L585.6 636.5 L539 685.8 L537.3 618.2 Z" fill="#4068c6" opacity="0.9"/>
</svg>
<!-- browser panel -->
<div class="abs panelhdr" style="left:4px;top:151px;width:300px;height:24px"></div>
<svg class="abs" style="left:4px;top:151px" width="300" height="24" viewBox="5 152 300 24"><path d="M10 163.500 L14.500 160.500 V166.500Z M15.500 163.500 L20 160.500 V166.500Z" fill="#333"/><circle cx="288.500" cy="164" r="4.500" fill="#222"/><rect x="286" y="163.300" width="5" height="1.400" fill="#f2f2f2"/><path d="M300.500 158 V170 M302.500 159.500 V168.500" stroke="#666" stroke-width="1"/></svg>
<div class="t" style="left:29px;top:156px;font-size:11px;color:#4a4a4a">BROWSER</div>
<!-- tree rows -->
<div class="row" style="left:40px;top:181px;width:153px"></div>
<div class="abs" style="left:42px;top:183px;width:3px;height:17px;background:#5fe6cf"></div>
<div class="abs" style="left:70px;top:183px;width:98px;height:16px;background:#8e8e8e"></div>
<div class="t" style="left:103px;top:184px;font-size:11px;font-weight:700;color:#fff">(Unsaved)</div>
<div class="row" style="left:58px;top:205px;width:138px"><div class="t" style="left:33px">Document Settings</div></div>
<div class="row" style="left:58px;top:229px;width:110px"><div class="t" style="left:33px">Named Views</div></div>
<div class="row" style="left:58px;top:253px;width:99px"><div class="t" style="left:58px">Origin</div></div>
<div class="row" style="left:58px;top:277px;width:103px"><div class="t" style="left:58px">Bodies</div></div>
<div class="row" style="left:58px;top:301px;width:115px"><div class="t" style="left:58px">Sketches</div></div>
<div class="row" style="left:76px;top:325px;width:107px"><div class="t" style="left:58px">Sketch1</div></div>
<div class="row" style="left:76px;top:349px;width:107px"><div class="t" style="left:58px">Sketch2</div></div>
<div class="row" style="left:58px;top:373px;width:130px"><div class="t" style="left:58px">Construction</div></div>
<div class="row" style="left:76px;top:397px;width:100px"><div class="t" style="left:58px">Plane1</div></div>
<svg class="abs" style="left:0;top:177px" width="210" height="245" viewBox="1 178 210 245">
<defs>
<linearGradient id="trg" x1="0" y1="0" x2="1" y2="1"><stop offset="0.3" stop-color="#eee"/><stop offset="1" stop-color="#333"/></linearGradient>
<g id="texp"><path d="M0 10.500 L10 0 V10.500Z" fill="url(#trg)" stroke="#333" stroke-width="1"/></g>
<g id="tcol"><path d="M0.500 0 L7.500 6 L0.500 12Z" fill="#fafafa" stroke="#333" stroke-width="1.200"/></g>
<g id="eye"><path d="M0 5 Q7.500 -4.500 15 5 Q7.500 14.500 0 5Z" fill="#9a9a9a"/><circle cx="7.500" cy="5" r="3.200" fill="#f0f0f0"/><circle cx="7.500" cy="5" r="1.700" fill="#9a9a9a"/></g>
<g id="eyeoff"><path d="M0 5 Q7.500 -4 15 5 Q7.500 14 0 5Z" fill="none" stroke="#9a9a9a" stroke-width="1"/><circle cx="7.500" cy="5" r="2.800" fill="none" stroke="#9a9a9a" stroke-width="1"/><path d="M2.500 -0.500 L12.500 10.500" stroke="#9a9a9a" stroke-width="1.100"/></g>
<g id="fold"><path d="M0 0 H6 L7.500 2 H15 V13 H0Z" fill="#8e8e8e"/><path d="M0.500 3.400 H14.500" stroke="#b4b4b4" stroke-width="0.800"/></g>
<g id="skt"><path d="M0.700 0.700 H14.200 V6 M8 13.700 H0.700 V0.700" fill="none" stroke="#444" stroke-width="1" stroke-dasharray="5 2"/><rect x="-0.300" y="-0.300" width="2.200" height="2.200" fill="#444"/><rect x="13.100" y="-0.300" width="2.200" height="2.200" fill="#444"/><rect x="-0.300" y="12.600" width="2.200" height="2.200" fill="#444"/><path d="M10.600 10.600 V9.300 a1.850 1.850 0 0 1 3.700 0 V10.600" fill="none" stroke="#d03038" stroke-width="1"/><rect x="9.100" y="10.600" width="6.700" height="4.500" fill="#e87880" stroke="#d03038" stroke-width="0.700"/></g>
</defs>
<use href="#texp" x="22" y="186.500"/><use href="#eye" x="50" y="187"/>
<path d="M80.500 187.500 L83 185 H92.500 V195 L90 197.500 H80.500Z" fill="#f4f4f4" stroke="#444" stroke-width="0.900"/><path d="M80.500 187.500 H90 V197.500 M90 187.500 L92.500 185" fill="none" stroke="#444" stroke-width="0.800"/>
<circle cx="179.500" cy="192" r="5.600" fill="#fff" stroke="#333" stroke-width="1.100"/><circle cx="179.500" cy="192" r="2.200" fill="#222"/>
<use href="#tcol" x="41" y="210"/><use href="#tcol" x="41" y="234"/><use href="#tcol" x="41" y="258"/><use href="#tcol" x="41" y="282"/>
<use href="#texp" x="40" y="306.500"/><use href="#texp" x="40" y="378.500"/>
<g fill="#8e8e8e" transform="translate(70 216)"><circle r="5.300"/><g id="teeth"><rect x="-1.700" y="-8" width="3.400" height="16"/><rect x="-8" y="-1.700" width="16" height="3.400"/></g><use href="#teeth" transform="rotate(45)"/><circle r="2.300" fill="#f0f0f0"/></g>
<use href="#fold" x="62" y="233.500"/>
<use href="#eyeoff" x="62" y="259"/><use href="#fold" x="88" y="257.500"/>
<use href="#eye" x="62" y="283"/><use href="#fold" x="88" y="281.500"/>
<path d="M84 270.500 H153 M84 294.500 H158" stroke="#4a78b8" stroke-width="1.600" stroke-dasharray="2.500 2.200"/>
<use href="#eye" x="62" y="307"/><use href="#fold" x="88" y="305.500"/>
<use href="#eyeoff" x="80" y="331"/><use href="#skt" x="105" y="328.500"/>
<use href="#eyeoff" x="80" y="355"/><use href="#skt" x="105" y="352.500"/>
<use href="#eye" x="62" y="379"/><use href="#fold" x="88" y="377.500"/>
<use href="#eyeoff" x="80" y="403"/>
<path d="M110.500 404 V400.500 H120.500 V410.500 H117" fill="none" stroke="#555" stroke-width="1"/><rect x="105.500" y="404" width="11" height="11" fill="#e8965c"/><rect x="110.500" y="404" width="6" height="6.500" fill="#f0b48a"/>
</svg>
<!-- unsaved bar -->
<div class="abs" style="left:469px;top:151px;width:264px;height:24px;background:#f3f3f3"></div>
<div class="abs" style="left:682px;top:151px;width:2px;height:24px;background:#dedede"></div>
<svg class="abs" style="left:471px;top:154px" width="19" height="17" viewBox="0 0 20 18"><path d="M9 1.500 L17 16 H1Z" fill="#f5a11a" stroke="#f5a11a" stroke-width="1.500" stroke-linejoin="round"/><rect x="8.200" y="6" width="1.700" height="5.500" fill="#fff"/><rect x="8.200" y="12.600" width="1.700" height="1.700" fill="#fff"/></svg>
<div class="t" style="left:493px;top:156px;font-size:11px;font-weight:700;color:#333">Unsaved:</div>
<div class="t" style="left:563px;top:156px;font-size:11px;color:#333">Changes may be lost</div>
<div class="t" style="left:696px;top:156px;font-size:11px;color:#1479c4">Save</div>

<!-- view cube -->
<svg class="abs" style="left:1079px;top:164px" width="110" height="110" viewBox="1080 165 110 110">
<defs><filter id="vcs" x="-30%" y="-30%" width="160%" height="160%"><feGaussianBlur stdDeviation="4"/></filter>
<linearGradient id="vcf" x1="0" y1="0" x2="0" y2="1"><stop offset="0" stop-color="#f4f4f4"/><stop offset="1" stop-color="#e2e2e2"/></linearGradient></defs>
<path d="M1108 238 L1146 256 L1172 232 L1168 222 L1110 228Z" fill="#b8b8b8" filter="url(#vcs)" opacity="0.9"/>
<path d="M1102.700 196.700 L1129.700 175 L1170.400 187.200 L1146.600 212.600Z" fill="#f1f1f1"/>
<path d="M1102.700 196.700 L1146.600 212.600 L1145 251.700 L1105.400 234.800Z" fill="url(#vcf)"/>
<path d="M1146.600 212.600 L1170.400 187.200 L1168.500 225.500 L1145 251.700Z" fill="#e6e6e6"/>
<path d="M1102.700 196.700 L1129.700 175 L1170.400 187.200 M1102.700 196.700 L1146.600 212.600 L1170.400 187.200 M1146.600 212.600 L1145 251.700 M1170.400 187.200 L1168.500 225.500" fill="none" stroke="#8a8a8a" stroke-width="0.700" stroke-dasharray="5 2.500"/>
<path d="M1138 204.500 L1146.600 212.600 L1146.200 221 L1138.500 217Z" fill="#dfe3ea"/>
<path d="M1100.600 189.500 L1105.400 234.800" stroke="#5a5af0" stroke-width="2.200"/>
<path d="M1105.400 234.800 L1153 256" stroke="#eb9a9a" stroke-width="2.200"/>
<text x="1094" y="187.500" font-size="13" fill="#7a7aff" font-family="Liberation Sans,sans-serif">Z</text>
<text x="1155" y="264" font-size="13" fill="#ff7878" font-family="Liberation Sans,sans-serif">X</text>
<g font-family="Liberation Sans,sans-serif" fill="#9aa0a8" font-weight="700">
<text transform="matrix(0.93 0.34 -0.04 0.98 1110 221)" font-size="9.500">FRONT</text>
<text transform="matrix(0.88 0.27 -0.62 0.62 1128 190)" font-size="9">TOP</text>
<text transform="matrix(0.6 -0.66 0.04 1 1152.500 227)" font-size="7">RIGHT</text>
</g>
</svg>
<!-- edit feature dialog -->
<div class="abs" style="left:896px;top:271px;width:300px;height:183px;background:#f2f2f2;border:1px solid #c8c8c8"></div>
<div class="abs" style="left:897px;top:295px;width:298px;height:1px;background:#d0d0d0"></div>
<div class="abs" style="left:897px;top:417px;width:298px;height:1px;background:#d0d0d0"></div>
<svg class="abs" style="left:896px;top:271px" width="300" height="25" viewBox="897 272 300 25"><path d="M899.500 278 V290 M901.500 279.500 V288.500" stroke="#666" stroke-width="1"/><circle cx="913" cy="284.500" r="4.500" fill="#222"/><rect x="910.500" y="283.800" width="5" height="1.400" fill="#f2f2f2"/><path d="M1187.500 284.500 L1183 281.500 V287.500Z M1192.500 284.500 L1188 281.500 V287.500Z" fill="#222"/></svg>
<div class="t" style="left:921px;top:276px;font-size:11px;color:#4a4a4a">EDIT FEATURE</div>
<div class="t" style="left:909px;top:304px;font-size:11px;color:#222">Type</div>
<div class="t" style="left:909px;top:334px;font-size:11px;color:#222">Objects</div>
<div class="t" style="left:909px;top:364px;font-size:11px;color:#222">Mirror Plane</div>
<div class="t" style="left:909px;top:394px;font-size:11px;color:#222">Compute Option</div>
<div class="abs" style="left:1002px;top:298px;width:162px;height:27px;background:#fff;border:1px solid #dcdcdc;border-radius:2px"></div>
<div class="abs" style="left:1002px;top:388px;width:162px;height:27px;background:#fff;border:1px solid #dcdcdc;border-radius:2px"></div>
<div class="abs" style="left:1002px;top:328px;width:79px;height:27px;background:#0696d7;border-radius:2px"></div>
<div class="abs" style="left:1002px;top:358px;width:78px;height:27px;background:#fff;border:1px solid #dcdcdc;border-radius:2px"></div>
<div class="t" style="left:1026px;top:304px;font-size:11px;color:#222">Features</div>
<div class="t" style="left:1024px;top:334px;font-size:11px;color:#fff">2 selected</div>
<div class="t" style="left:1024px;top:364px;font-size:11px;color:#222">1 selected</div>
<div class="t" style="left:1010px;top:394px;font-size:11px;color:#222">Adjust</div>
<svg class="abs" style="left:1002px;top:298px" width="170" height="120" viewBox="1003 299 170 120">
<path d="M1152.500 310 H1158.500 L1155.500 314Z M1152.500 400 H1158.500 L1155.500 404Z" fill="#222"/>
<path d="M1007.500 312 L1010.500 307 H1019 L1022 312 V317.500 H1007.500Z" fill="#ececec" stroke="#555" stroke-width="0.900"/><path d="M1011.500 305.500 L1013 303.500 H1019.500 V308.500 L1018 310.500 H1011.500Z" fill="#5fa6e0" stroke="#2f76c0" stroke-width="0.700"/>
<path d="M1011.500 335 V347.500 L1014.500 344.800 L1016.500 349.500 L1018.300 348.700 L1016.300 344 H1020.200Z" fill="#222" stroke="#fff" stroke-width="0.900"/>
<path d="M1011.500 365 V377.500 L1014.500 374.800 L1016.500 379.500 L1018.300 378.700 L1016.300 374 H1020.200Z" fill="#fff" stroke="#333" stroke-width="0.900"/>
<path d="M1093 338 L1101 346 M1101 338 L1093 346 M1092.500 368 L1100.500 376 M1100.500 368 L1092.500 376" stroke="#333" stroke-width="1.700"/>
</svg>
<svg class="abs" style="left:904px;top:429px" width="16" height="16" viewBox="0 0 16 16"><circle cx="8" cy="8" r="6" fill="#111"/><rect x="7.100" y="7" width="1.900" height="4.500" fill="#fff"/><rect x="7.100" y="4.300" width="1.900" height="1.800" fill="#fff"/></svg>
<div class="abs" style="left:1054px;top:426px;width:60px;height:19px;background:#e6e6e6;border:1px solid #bcbcbc"></div>
<div class="abs" style="left:1124px;top:426px;width:60px;height:19px;background:#e6e6e6;border:1px solid #bcbcbc"></div>
<div class="t" style="left:1054px;top:429px;width:60px;text-align:center;font-size:12px;color:#444">OK</div>
<div class="t" style="left:1124px;top:429px;width:60px;text-align:center;font-size:12px;color:#444">Cancel</div>
<!-- tooltip -->
<div class="abs" style="left:896px;top:711px;width:320px;height:18px;background:#fbfbfb;border:1px solid #707070"></div>
<div class="t" style="left:900px;top:711px;font-family:'Liberation Serif','DejaVu Serif',serif;font-size:14px;line-height:17px;color:#000;letter-spacing:0.05px">Select more features or select mirror plane. Hold Ctrl</div>

<!-- comments panel -->
<div class="abs panelhdr" style="left:4px;top:959px;width:300px;height:25px"></div>
<div class="t" style="left:29px;top:964px;font-size:11px;color:#4a4a4a">COMMENTS</div>
<svg class="abs" style="left:280px;top:962px" width="24" height="20" viewBox="281 963 24 20"><circle cx="288.500" cy="972.500" r="4.500" fill="#222"/><path d="M286 972.500 H291 M288.500 970 V975" stroke="#f2f2f2" stroke-width="1.300"/><path d="M300.500 966.500 V978.500 M302.500 968 V977" stroke="#666" stroke-width="1"/></svg>
<!-- nav bar -->
<div class="abs" style="left:497px;top:960px;width:238px;height:24px;background:#f2f2f2"></div>
<svg class="abs" style="left:497px;top:960px" width="238" height="24" viewBox="498 961 238 24">
<defs><g id="na"><path d="M0 0 H6 L3 4Z" fill="#333"/></g></defs>
<use href="#na" x="522" y="971"/><use href="#na" x="633" y="971"/><use href="#na" x="663" y="971"/><use href="#na" x="694" y="971"/><use href="#na" x="725" y="971"/>
<!-- orbit -->
<g fill="none" stroke="#333" stroke-width="1.200"><path d="M509 982 V966 M506.500 968.500 L509 965 L511.500 968.500"/><path d="M513 970.500 Q517.500 972 516.500 974.500 Q514 978 505 976.500 M507.500 973.500 L503.500 976 L507 979.500"/><path d="M505 970.500 Q501.500 972 502.500 974" /></g>
<!-- look at -->
<g><path d="M535 969 H548 V980 H535Z" fill="#f6f6f6" stroke="#444" stroke-width="1.200"/><path d="M536 968.500 L539 965.500 L541 967 L545 964.500 L547 968.500" fill="none" stroke="#444" stroke-width="1.200"/><rect x="537.500" y="972.500" width="8" height="4.500" fill="#bbb" stroke="#444" stroke-width="1"/></g>
<!-- pan hand -->
<path d="M563.500 974 L561 970.500 Q560.500 969 562 969 L564.500 971.500 V965 Q565.300 963.800 566.200 965 V969.500 V963.800 Q567.200 962.600 568.200 963.800 V969.500 V964.500 Q569.200 963.400 570.200 964.500 V970 V966.500 Q571.200 965.500 572.200 966.500 V975 Q572 979 569.500 980.500 H565.500 Q564 978 563.500 974Z" fill="#fafafa" stroke="#333" stroke-width="1"/>
<!-- zoom -->
<g><circle cx="592" cy="971" r="4.800" fill="#cfe4f6" stroke="#555" stroke-width="1.300"/><path d="M595.500 975 L600 980" stroke="#444" stroke-width="2.400"/><path d="M597 965.500 H602 M599.500 963 V968 M597 970 H602" stroke="#333" stroke-width="1"/></g>
<!-- zoom fit -->
<g><circle cx="618.500" cy="971" r="5.800" fill="#f4f4f4" stroke="#555" stroke-width="1.300"/><rect x="616" y="968.500" width="5.500" height="5.500" fill="none" stroke="#444" stroke-width="1"/><path d="M622.500 975.500 L627.500 981" stroke="#444" stroke-width="2.600"/></g>
<!-- display -->
<g><rect x="646.500" y="965.500" width="14" height="11" fill="#9cc4ec" stroke="#333" stroke-width="1.300"/><path d="M651 980.500 H656 M653.500 977 V980" stroke="#555" stroke-width="1.400"/></g>
<!-- grid -->
<g><rect x="677" y="965" width="15" height="15" fill="#e8e8ee"/><path d="M677.500 965 V980 M680.500 965 V980 M683.500 965 V980 M686.500 965 V980 M689.500 965 V980 M692 965 V980 M677 965.500 H692 M677 968.500 H692 M677 971.500 H692 M677 974.500 H692 M677 977.500 H692 M677 980 H692" stroke="#4a4a5a" stroke-width="0.900"/></g>
<!-- viewports -->
<g fill="#8cb8e8" stroke="#2f5fa8" stroke-width="1.100"><rect x="707.500" y="966.500" width="6.500" height="5"/><rect x="715.500" y="966.500" width="6.500" height="5"/><rect x="707.500" y="973.500" width="6.500" height="5"/><rect x="715.500" y="973.500" width="6.500" height="5"/></g>
</svg>
<div class="t" style="left:1082px;top:964px;font-size:11px;font-weight:700;color:#222">Multiple selections</div>
<!-- bottom timeline -->
<div class="abs" style="left:0;top:988px;width:1200px;height:1px;background:#d6d6d6"></div>
<div class="abs bottom"></div>
<svg class="abs" style="left:0;top:989px" width="1200" height="49" viewBox="1 990 1200 49">
<g fill="#444">
<path d="M12 1007 H14.500 V1020 H12Z M24 1007 V1020 L15 1013.500Z"/>
<path d="M47 1007.500 V1019.500 L37.500 1013.500Z M48 1010.500 H50 V1016.500 H48Z"/>
<path d="M62.500 1006 V1021 L74 1013.500Z"/>
<path d="M89.500 1007.500 V1019.500 L99 1013.500Z M86 1010.500 H88 V1016.500 H86Z"/>
<path d="M113 1007 V1020 L122 1013.500Z M122.500 1007 H125 V1020 H122.500Z"/>
</g>
<rect x="145" y="997" width="164" height="6" fill="#6af8dc"/>
<path d="M155.500 1024.500 V1030 H324.500 V1024.500 M179.500 1024.500 V1030 M203.500 1024.500 V1030 M227.500 1024.500 V1030 M251.500 1024.500 V1030 M275.500 1024.500 V1030 M299.500 1024.500 V1030" fill="none" stroke="#c2c2c2" stroke-width="1.500"/>
<defs>
<g id="tsk"><path d="M1.500 1.500 H14 V8 M8 14.500 H1.500 V1.500" fill="none" stroke="#444" stroke-width="1" stroke-dasharray="5 2.500"/><rect x="0" y="0" width="2.600" height="2.600" fill="#1e78e0"/><rect x="12.700" y="0" width="2.600" height="2.600" fill="#1e78e0"/><rect x="0" y="13.200" width="2.600" height="2.600" fill="#1e78e0"/><path d="M8.500 14 L13.500 9 L15.700 11.200 L10.700 16.200 L8 16.800Z" fill="#f5b43c"/><path d="M13.500 9 L14.600 7.900 L16.800 10.100 L15.700 11.200Z" fill="#e84848"/></g>
<g id="tex"><path d="M0 2.500 L2.500 0 H12 V10 L9.500 12.500 H0Z" fill="#6aaee6"/><path d="M0 2.500 L2.500 0 H12 L9.500 2.500Z" fill="#a4d2f6"/><path d="M9.500 2.500 L12 0 V10 L9.500 12.500Z" fill="#3f86c8"/><path d="M0 12.500 H9.500 L12 10 V12.500 L9.500 15 H0Z" fill="#c4c4c4"/><path d="M14.500 12.500 V2 M12.700 4.800 L14.500 1 L16.300 4.800Z" stroke="#222" stroke-width="1.100" fill="#222"/></g>
</defs>
<use href="#tsk" x="147" y="1004.700"/>
<use href="#tex" x="171" y="1005.300"/>
<g transform="translate(195 1004)"><path d="M0.500 6.500 L4.500 1 H8.500 V11.500 L4.500 17 H0.500Z" fill="#e6e6e6" stroke="#666" stroke-width="0.900"/><path d="M4.800 6.500 L9.500 1 V11.500 L4.800 17Z" fill="#5cbf78"/><path d="M11.700 6.500 L16.300 1 V11.500 L11.700 17Z" fill="#e8965c"/></g>
<use href="#tsk" x="219" y="1004.700"/>
<rect x="239" y="1001" width="24.500" height="23.500" rx="2" fill="#0f96d8"/><rect x="263.500" y="1001" width="23.500" height="23.500" rx="2" fill="#0f96d8"/>
<path d="M243 1005.300 H258.500 L255 1015.500 H246.800Z" fill="#93c9f4"/><path d="M243 1005.300 L246.800 1015.500 L244.500 1013Z M258.500 1005.300 L255 1015.500 L257.300 1013Z" fill="#4f94d6"/><circle cx="250.800" cy="1017" r="3.200" fill="#fff" stroke="#333" stroke-width="1"/>
<use href="#tex" x="267.500" y="1005.300"/>
<path d="M297.500 1006.500 V1019.500 H291.500Z" fill="#fafafa" stroke="#555" stroke-width="1"/><path d="M299.500 1006 V1020 H306Z" fill="#5a9cdc"/>
<path d="M305 999 H317 V1001 L312.200 1004.500 V1030.500 H310.200 V1004.500 L305 1001Z" fill="#5a5a5a"/>
<g opacity="0.500"><path d="M316.500 1008 L319 1005.500 H330.500 V1016.500 L328 1019 H316.500Z" fill="#f0f0f0" stroke="#9a9a9a" stroke-width="0.900"/><path d="M319 1010 H323 V1014 H327 V1017 H319Z" fill="#8ebce8"/></g>
<g fill="#9a9a9a" transform="translate(1179.500 1014)"><circle r="5.200"/><g id="gt2"><rect x="-1.700" y="-8" width="3.400" height="16"/><rect x="-8" y="-1.700" width="16" height="3.400"/></g><use href="#gt2" transform="rotate(45)"/><circle r="2.500" fill="#f2f2f2"/></g>
</svg>
<!-- inner white frame -->
<div class="abs" style="left:0;top:0;width:1px;height:1038px;background:#fff"></div>
<div class="abs" style="left:1199px;top:0;width:1px;height:1038px;background:#fff"></div>
<div class="abs" style="left:0;top:1037px;width:1200px;height:1px;background:#fff"></div>

</div></body></html>
